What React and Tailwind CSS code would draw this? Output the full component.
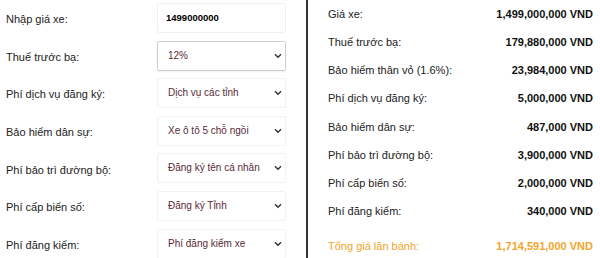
import React from "react";

const Chevron = () => (
  <svg width="8" height="6" viewBox="0 0 8 6" className="shrink-0">
    <path d="M1 1.3 L4 4.3 L7 1.3" fill="none" stroke="#333" strokeWidth="1.4" />
  </svg>
);

const leftRows = [
  { label: "Nhập giá xe:", input: "1499000000" },
  { label: "Thuế trước bạ:", select: "12%", strong: true },
  { label: "Phí dịch vụ đăng ký:", select: "Dịch vụ các tỉnh" },
  { label: "Bảo hiểm dân sự:", select: "Xe ô tô 5 chỗ ngồi" },
  { label: "Phí bảo trì đường bộ:", select: "Đăng ký tên cá nhân" },
  { label: "Phí cấp biển số:", select: "Đăng ký Tỉnh" },
  { label: "Phí đăng kiểm:", select: "Phí đăng kiểm xe" },
];

const rightRows = [
  ["Giá xe:", "1,499,000,000 VND"],
  ["Thuế trước bạ:", "179,880,000 VND"],
  ["Bảo hiểm thân vỏ (1.6%):", "23,984,000 VND"],
  ["Phí dịch vụ đăng ký:", "5,000,000 VND"],
  ["Bảo hiểm dân sự:", "487,000 VND"],
  ["Phí bảo trì đường bộ:", "3,900,000 VND"],
  ["Phí cấp biển số:", "2,000,000 VND"],
  ["Phí đăng kiểm:", "340,000 VND"],
];

export default function App() {
  return (
    <div
      className="w-[600px] h-[258px] bg-white flex overflow-hidden text-[11px] text-[#222]"
      style={{ fontFamily: '"Liberation Sans", Arial, sans-serif' }}
    >
      <div className="w-[306px] shrink-0 flex flex-col pt-[3px] pl-[6px]">
        {leftRows.map((r, i) => (
          <div key={i} className="h-[37.6px] shrink-0 flex items-start">
            <div className="w-[151px] h-[30px] flex items-center pt-[3px] text-[11px]">{r.label}</div>
            {r.input ? (
              <div className="w-[129px] h-[30px] border border-[#f0f0f0] rounded-[2px] flex items-center pl-[8px] font-bold text-[9.5px] text-black">
                {r.input}
              </div>
            ) : (
              <div
                className={
                  "w-[129px] h-[30px] rounded-[2px] flex items-center justify-between pl-[10px] pr-[3px] text-[10px] text-[#5a2a36] whitespace-nowrap " +
                  (r.strong
                    ? "border border-[#cfcfcf] shadow-[0_1px_2px_rgba(0,0,0,0.08)]"
                    : "border border-[#f2f2f2]")
                }
              >
                <span className="pb-[1px]">{r.select}</span>
                <Chevron />
              </div>
            )}
          </div>
        ))}
      </div>
      <div className="w-[2px] h-full bg-[#333] shrink-0" />
      <div className="flex-1 flex flex-col pl-[20px] pr-[7px] text-[11px]">
        {rightRows.map(([l, v], i) => (
          <div key={i} className="h-[28.2px] shrink-0 flex items-center justify-between">
            <span>{l}</span>
            <span className="font-bold text-[#111]">{v}</span>
          </div>
        ))}
        <div className="h-[10px] shrink-0" />
        <div className="h-[22px] flex items-center justify-between text-[#f2a52b]">
          <span>Tổng giá lăn bánh:</span>
          <span className="font-bold">1,714,591,000 VND</span>
        </div>
      </div>
    </div>
  );
}
